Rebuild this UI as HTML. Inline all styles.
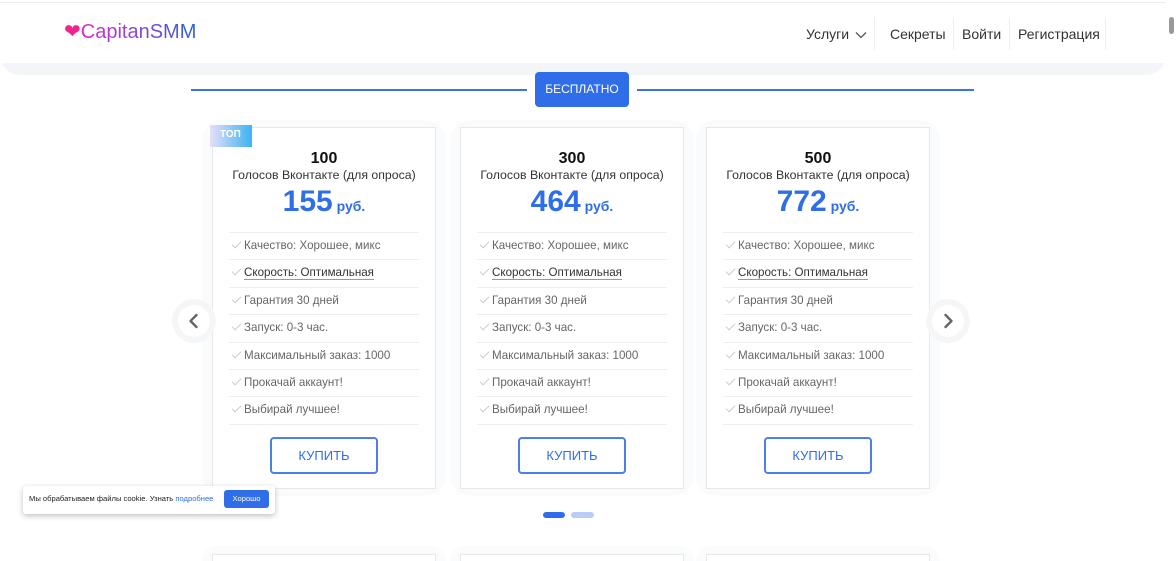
<!DOCTYPE html>
<html><head><meta charset="utf-8"><style>
*{box-sizing:border-box;margin:0;padding:0}
html,body{width:1176px;height:561px;overflow:hidden}
body{background:#fff;font-family:"Liberation Sans",Arial,sans-serif;position:relative}
.hdr{position:absolute;left:0;top:2px;width:1166px;height:73px;background:#f4f5f8;border-radius:0 0 20px 20px}
.hdr2{position:absolute;left:0;top:2px;width:1166px;height:61px;background:#fff;border-top:1px solid #eee}
.logo{position:absolute;left:64px;top:19px;font-size:20px;color:#b03adf}
.logo b{color:#f0248a;font-weight:normal}
.logo span{background:linear-gradient(90deg,#e02ad0,#2b62d8);-webkit-background-clip:text;color:transparent}
.nav{position:absolute;top:26px;font-size:14px;color:#333;}
.sep{position:absolute;top:17px;width:1px;height:33px;background:#eee}
.sb{position:absolute;right:0;top:0;width:10px;height:561px;background:#fff}
.sb i{position:absolute;left:3px;top:17px;width:5px;height:17px;background:#999;border-radius:3px}
.line{position:absolute;top:89px;height:2px;background:#3b73e6}
.badge{position:absolute;left:535px;top:72px;width:94px;height:35px;background:#2f6ee8;color:#fff;border-radius:4px;font-size:12px;text-align:center;line-height:35px}
.halo{position:absolute;width:244px;height:376px;background:#fafbfc;border-radius:20px}
.card{position:absolute;top:127px;width:224px;height:362px;background:#fff;border:1px solid #e8e8e8;text-align:center}
.n{margin-top:22px;font-size:16px;font-weight:bold;color:#111;line-height:18px}
.t{font-size:12.3px;color:#333;margin-top:0;line-height:15px}
.p{font-size:30px;font-weight:bold;color:#2f6ee8;margin-top:4px;line-height:30px}
.p small{font-size:14px}
ul{list-style:none;margin:11px 16px 0 16px;border-top:1px solid #eee}
li{height:27.4px;border-bottom:1px solid #eee;text-align:left;font-size:11.6px;color:#666;line-height:26px;padding-left:15px;position:relative}
li:before{content:"";position:absolute;left:3px;top:8px;width:8px;height:4px;border-left:1px solid #ccc;border-bottom:1px solid #ccc;transform:rotate(-45deg)}
li u{color:#333;text-decoration:none;border-bottom:1px solid #999}
.btn{margin:12px auto 0;width:108px;height:37px;border:2px solid #4a80e8;border-radius:4px;color:#2f6ee8;font-size:13px;line-height:33px}
.top{position:absolute;left:-3px;top:-3px;width:42px;height:22px;background:linear-gradient(90deg,#e6dff8,#3cb2f3);color:#fff;font-size:10px;font-weight:bold;line-height:20px;padding-left:10px;text-align:left}
.arr{position:absolute;top:305px;width:32px;height:32px;border-radius:50%;background:#fff;box-shadow:0 0 0 6px #f5f6f8}
.arr svg{position:absolute;left:8px;top:8px}
.dot{position:absolute;top:512px;height:6px;border-radius:3px}
.ck{position:absolute;left:23px;top:486px;width:252px;height:28px;background:#fff;box-shadow:0 2px 6px rgba(0,0,0,.25);border-radius:3px;font-size:7.6px;color:#222;line-height:26px;padding-left:6px}
.ck a{color:#2f6ee8}
.ck b{position:absolute;right:6px;top:4px;width:45px;height:18px;background:#2f6ee8;color:#fff;font-weight:normal;border-radius:3px;text-align:center;line-height:18px}
</style></head><body>
<div class="hdr"></div><div class="hdr2"></div>
<div class="logo"><b>❤</b><span>CapitanSMM</span></div>
<div class="nav" style="left:806px">Услуги <svg width="12" height="8" viewBox="0 0 12 8" style="margin-left:2px"><path d="M1 1.5l5 5 5-5" stroke="#555" stroke-width="1.3" fill="none"/></svg></div>
<div class="sep" style="left:874px"></div>
<div class="nav" style="left:890px">Секреты</div>
<div class="sep" style="left:953px"></div>
<div class="nav" style="left:962px">Войти</div>
<div class="sep" style="left:1009px"></div>
<div class="nav" style="left:1018px">Регистрация</div>
<div class="sep" style="left:1105px"></div>
<div class="sb"><i></i></div>
<div class="line" style="left:191px;width:336px"></div>
<div class="line" style="left:637px;width:337px"></div>
<div class="badge">БЕСПЛАТНО</div>

<div class="halo" style="left:202px;top:120px"></div>
<div class="halo" style="left:450px;top:120px"></div>
<div class="halo" style="left:696px;top:120px"></div>

<div class="card" style="left:212px"><div class="top">ТОП</div>
<div class="n">100</div><div class="t">Голосов Вконтакте (для опроса)</div><div class="p">155<small> руб.</small></div>
<ul><li>Качество: Хорошее, микс</li><li><u>Скорость: Оптимальная</u></li><li>Гарантия 30 дней</li><li>Запуск: 0-3 час.</li><li>Максимальный заказ: 1000</li><li>Прокачай аккаунт!</li><li>Выбирай лучшее!</li></ul>
<div class="btn">КУПИТЬ</div></div>

<div class="card" style="left:460px">
<div class="n">300</div><div class="t">Голосов Вконтакте (для опроса)</div><div class="p">464<small> руб.</small></div>
<ul><li>Качество: Хорошее, микс</li><li><u>Скорость: Оптимальная</u></li><li>Гарантия 30 дней</li><li>Запуск: 0-3 час.</li><li>Максимальный заказ: 1000</li><li>Прокачай аккаунт!</li><li>Выбирай лучшее!</li></ul>
<div class="btn">КУПИТЬ</div></div>

<div class="card" style="left:706px">
<div class="n">500</div><div class="t">Голосов Вконтакте (для опроса)</div><div class="p">772<small> руб.</small></div>
<ul><li>Качество: Хорошее, микс</li><li><u>Скорость: Оптимальная</u></li><li>Гарантия 30 дней</li><li>Запуск: 0-3 час.</li><li>Максимальный заказ: 1000</li><li>Прокачай аккаунт!</li><li>Выбирай лучшее!</li></ul>
<div class="btn">КУПИТЬ</div></div>

<div class="arr" style="left:178px"><svg width="16" height="16" viewBox="0 0 16 16"><path d="M10.5 2L4.5 8l6 6" stroke="#666" stroke-width="2.4" fill="none" stroke-linecap="round" stroke-linejoin="round"/></svg></div>
<div class="arr" style="left:932px"><svg width="16" height="16" viewBox="0 0 16 16"><path d="M5.5 2l6 6-6 6" stroke="#666" stroke-width="2.4" fill="none" stroke-linecap="round" stroke-linejoin="round"/></svg></div>
<div class="dot" style="left:543px;width:22px;background:#2f6ee8"></div>
<div class="dot" style="left:571px;width:23px;background:#b9cdf5"></div>

<div class="halo" style="left:202px;top:546px;height:30px"></div>
<div class="halo" style="left:450px;top:546px;height:30px"></div>
<div class="halo" style="left:696px;top:546px;height:30px"></div>
<div class="card" style="left:212px;top:554px;height:20px"></div>
<div class="card" style="left:460px;top:554px;height:20px"></div>
<div class="card" style="left:706px;top:554px;height:20px"></div>

<div class="ck">Мы обрабатываем файлы cookie. Узнать <a>подробнее</a><b>Хорошо</b></div>
</body></html>
